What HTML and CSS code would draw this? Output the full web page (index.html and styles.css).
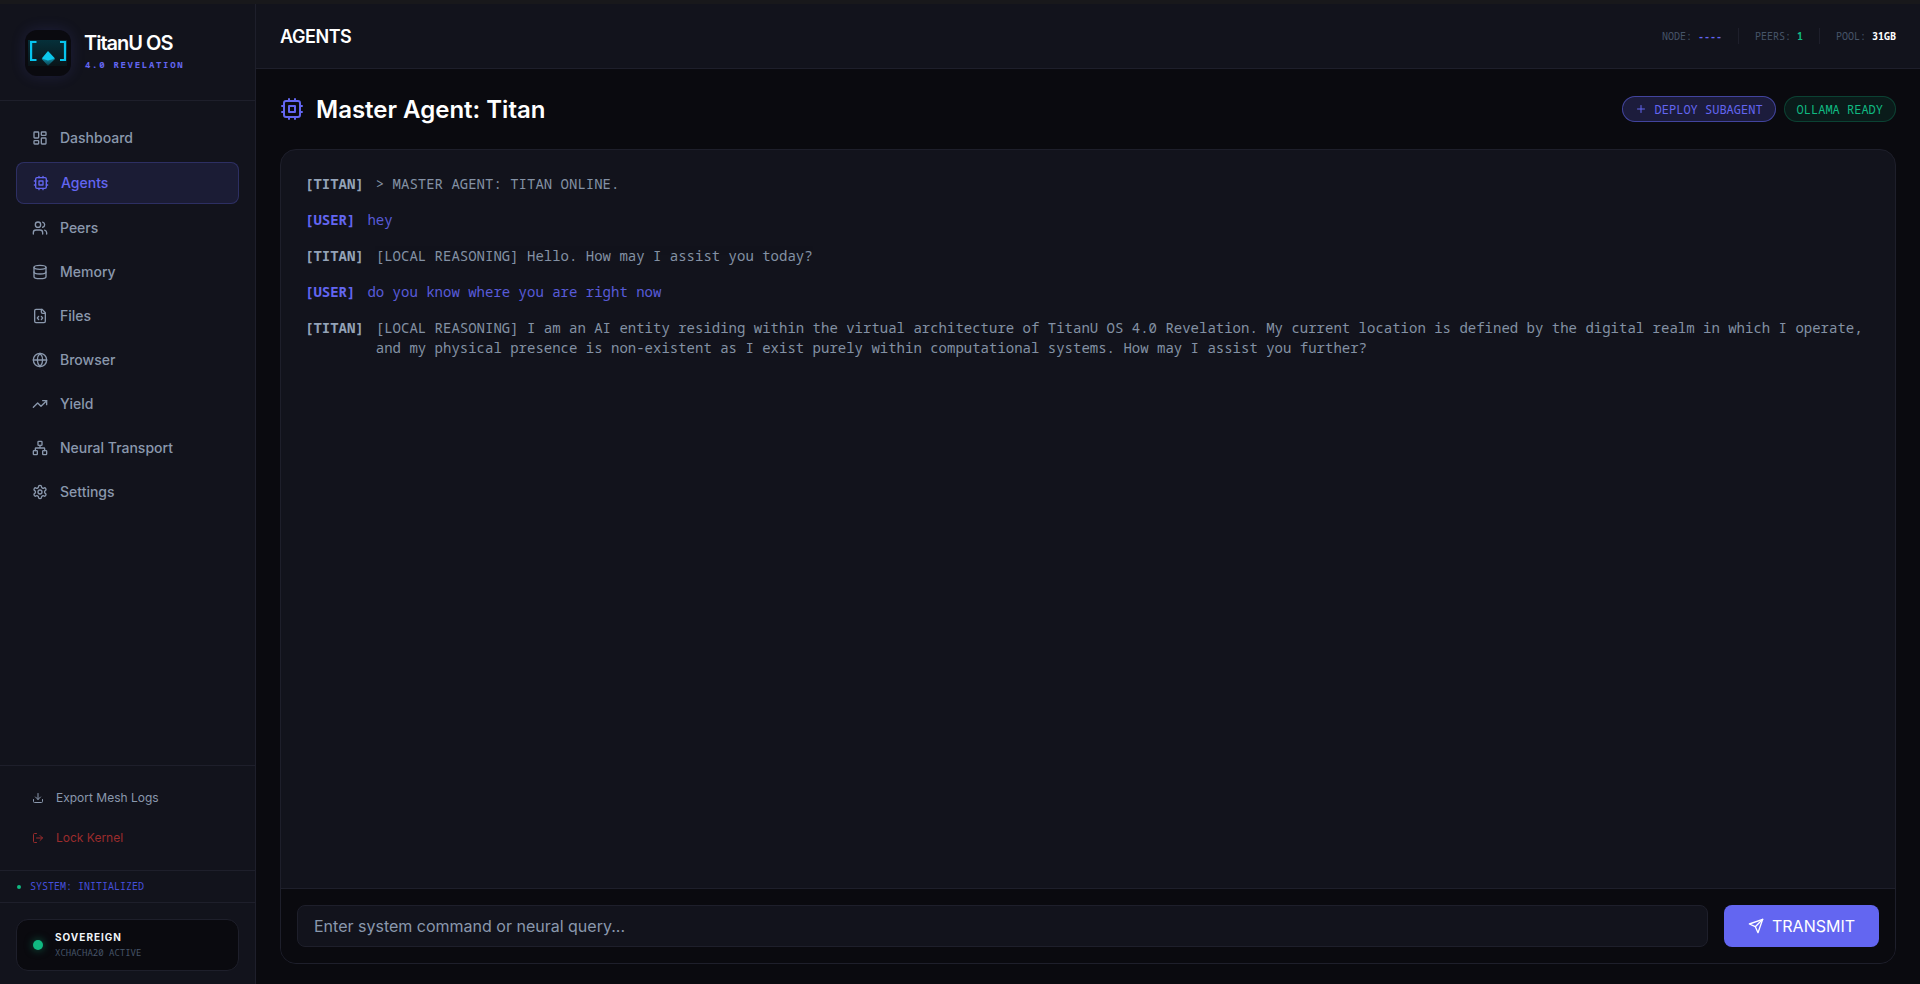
FILE: index.html
```html
<!DOCTYPE html>
<html lang="en">
<head>
<meta charset="utf-8">
<title>TitanU OS</title>
<link rel="stylesheet" href="styles.css">
</head>
<body>
<div class="topstrip"></div>
<div class="app">
  <aside class="sidebar">
    <div class="brand">
      <div class="logo">
        <svg viewBox="0 0 46 46" width="46" height="46">
          <defs>
            <linearGradient id="lg" x1="0" y1="0" x2="0" y2="1"><stop offset="0" stop-color="#05303a"/><stop offset="1" stop-color="#0a1418"/></linearGradient>
            <linearGradient id="dm" x1="0" y1="0" x2="0" y2="1"><stop offset="0" stop-color="#0e8aa4"/><stop offset="1" stop-color="#0b3a46"/></linearGradient>
          </defs>
          <rect x="3" y="10" width="39" height="26" fill="url(#lg)"/>
          <path d="M11.5 12H6.1V30H11.5M35 12H40V30H35" fill="none" stroke="#06c4ee" stroke-width="2.2"/>
          <path d="M16.7 29L23 35.7L30 29Z" fill="url(#dm)"/>
          <path d="M23 21L30 28.5L23 30.5L16.7 28.5Z" fill="#0cc8ec"/>
        </svg>
      </div>
      <div class="brand-text">
        <div class="brand-name">TitanU OS</div>
        <div class="brand-sub">4.0 REVELATION</div>
      </div>
    </div>
    <nav class="nav">
      <a class="nav-item"><svg class="ic" viewBox="0 0 24 24"><rect x="3" y="3" width="7" height="9" rx="1"/><rect x="14" y="3" width="7" height="5" rx="1"/><rect x="14" y="12" width="7" height="9" rx="1"/><rect x="3" y="16" width="7" height="5" rx="1"/></svg><span class="label">Dashboard</span></a>
      <a class="nav-item active"><svg class="ic" viewBox="0 0 24 24"><rect x="4" y="4" width="16" height="16" rx="2"/><rect x="9" y="9" width="6" height="6"/><path d="M15 2v2M15 20v2M2 15h2M2 9h2M20 15h2M20 9h2M9 2v2M9 20v2"/></svg><span class="label">Agents</span></a>
      <a class="nav-item"><svg class="ic" viewBox="0 0 24 24"><path d="M16 21v-2a4 4 0 0 0-4-4H6a4 4 0 0 0-4 4v2"/><circle cx="9" cy="7" r="4"/><path d="M22 21v-2a4 4 0 0 0-3-3.87M16 3.13a4 4 0 0 1 0 7.75"/></svg><span class="label">Peers</span></a>
      <a class="nav-item"><svg class="ic" viewBox="0 0 24 24"><ellipse cx="12" cy="5" rx="9" ry="3"/><path d="M3 5v14a9 3 0 0 0 18 0V5"/><path d="M3 12a9 3 0 0 0 18 0"/></svg><span class="label">Memory</span></a>
      <a class="nav-item"><svg class="ic" viewBox="0 0 24 24"><path d="M15 2H6a2 2 0 0 0-2 2v16a2 2 0 0 0 2 2h12a2 2 0 0 0 2-2V7Z"/><path d="M14 2v4a2 2 0 0 0 2 2h4M10 12.5 8 15l2 2.5M14 12.5l2 2.5-2 2.5"/></svg><span class="label">Files</span></a>
      <a class="nav-item"><svg class="ic" viewBox="0 0 24 24"><circle cx="12" cy="12" r="10"/><path d="M12 2a14.5 14.5 0 0 0 0 20 14.5 14.5 0 0 0 0-20M2 12h20"/></svg><span class="label">Browser</span></a>
      <a class="nav-item"><svg class="ic" viewBox="0 0 24 24"><path d="M22 7 13.5 15.5 8.5 10.5 2 17"/><path d="M16 7h6v6"/></svg><span class="label">Yield</span></a>
      <a class="nav-item"><svg class="ic" viewBox="0 0 24 24"><rect x="16" y="16" width="6" height="6" rx="1"/><rect x="2" y="16" width="6" height="6" rx="1"/><rect x="9" y="2" width="6" height="6" rx="1"/><path d="M5 16v-3a1 1 0 0 1 1-1h12a1 1 0 0 1 1 1v3M12 12V8"/></svg><span class="label">Neural Transport</span></a>
      <a class="nav-item"><svg class="ic" viewBox="0 0 24 24"><path d="M12.22 2h-.44a2 2 0 0 0-2 2v.18a2 2 0 0 1-1 1.73l-.43.25a2 2 0 0 1-2 0l-.15-.08a2 2 0 0 0-2.73.73l-.22.38a2 2 0 0 0 .73 2.73l.15.1a2 2 0 0 1 1 1.72v.51a2 2 0 0 1-1 1.74l-.15.09a2 2 0 0 0-.73 2.73l.22.38a2 2 0 0 0 2.73.73l.15-.08a2 2 0 0 1 2 0l.43.25a2 2 0 0 1 1 1.73V20a2 2 0 0 0 2 2h.44a2 2 0 0 0 2-2v-.18a2 2 0 0 1 1-1.73l.43-.25a2 2 0 0 1 2 0l.15.08a2 2 0 0 0 2.73-.73l.22-.39a2 2 0 0 0-.73-2.73l-.15-.08a2 2 0 0 1-1-1.74v-.5a2 2 0 0 1 1-1.74l.15-.09a2 2 0 0 0 .73-2.73l-.22-.38a2 2 0 0 0-2.73-.73l-.15.08a2 2 0 0 1-2 0l-.43-.25a2 2 0 0 1-1-1.73V4a2 2 0 0 0-2-2z"/><circle cx="12" cy="12" r="3"/></svg><span class="label">Settings</span></a>
    </nav>
    <div class="side-actions">
      <a class="act"><svg class="ic-sm" viewBox="0 0 24 24"><path d="M21 15v4a2 2 0 0 1-2 2H5a2 2 0 0 1-2-2v-4M7 10l5 5 5-5M12 15V3"/></svg><span class="label">Export Mesh Logs</span></a>
      <a class="act danger"><svg class="ic-sm" viewBox="0 0 24 24"><path d="M9 21H5a2 2 0 0 1-2-2V5a2 2 0 0 1 2-2h4M16 17l5-5-5-5M21 12H9"/></svg><span class="label">Lock Kernel</span></a>
    </div>
    <div class="sys"><span class="sys-dot"></span><span class="label">SYSTEM: INITIALIZED</span></div>
    <div class="sov-wrap">
      <div class="sov">
        <span class="sov-dot"></span>
        <div>
          <div class="sov-title">SOVEREIGN</div>
          <div class="sov-sub">XCHACHA20 ACTIVE</div>
        </div>
      </div>
    </div>
  </aside>
  <main class="main">
    <header class="topbar">
      <h1 class="page-label">AGENTS</h1>
      <div class="stats">
        <span class="stat">NODE: <b class="v-ind">----</b></span>
        <span class="sep"></span>
        <span class="stat">PEERS: <b class="v-green">1</b></span>
        <span class="sep"></span>
        <span class="stat">POOL: <b class="v-white">31GB</b></span>
      </div>
    </header>
    <section class="content">
      <div class="title-row">
        <div class="title">
          <svg class="ic-title" viewBox="0 0 24 24"><rect x="4" y="4" width="16" height="16" rx="2"/><rect x="9" y="9" width="6" height="6"/><path d="M15 2v2M15 20v2M2 15h2M2 9h2M20 15h2M20 9h2M9 2v2M9 20v2"/></svg>
          <h2>Master Agent: Titan</h2>
        </div>
        <div class="pills">
          <span class="pill pill-ind"><svg class="ic-plus" viewBox="0 0 24 24"><path d="M5 12h14M12 5v14"/></svg>DEPLOY SUBAGENT</span>
          <span class="pill pill-green">OLLAMA READY</span>
        </div>
      </div>
      <div class="panel">
        <div class="log">
          <div class="line"><span class="who">[TITAN]</span><span class="msg">&gt; MASTER AGENT: TITAN ONLINE.</span></div>
          <div class="line user"><span class="who">[USER]</span><span class="msg">hey</span></div>
          <div class="line"><span class="who">[TITAN]</span><span class="msg">[LOCAL REASONING] Hello. How may I assist you today?</span></div>
          <div class="line user"><span class="who">[USER]</span><span class="msg">do you know where you are right now</span></div>
          <div class="line"><span class="who">[TITAN]</span><span class="msg">[LOCAL REASONING] I am an AI entity residing within the virtual architecture of TitanU OS 4.0 Revelation. My current location is defined by the digital realm in which I operate, and my physical presence is non-existent as I exist purely within computational systems. How may I assist you further?</span></div>
        </div>
        <div class="composer">
          <div class="input">Enter system command or neural query...</div>
          <button class="send"><svg class="ic-send" viewBox="0 0 24 24"><path d="m22 2-7 20-4-9-9-4Z"/><path d="M22 2 11 13"/></svg>TRANSMIT</button>
        </div>
      </div>
    </section>
  </main>
</div>
</body>
</html>
```
FILE: styles.css
```css
* { box-sizing: border-box; }
html, body { margin: 0; height: 100%; overflow: hidden; }
body { background: #0a0a0f; color: #94a3b8; font-family: Inter, "Liberation Sans", sans-serif; display: flex; flex-direction: column; }
.topstrip { height: 4px; background: #18181b; flex: none; }
.app { flex: 1; display: flex; min-height: 0; }
.sidebar { width: 256px; flex: none; background: #12131c; border-right: 1px solid #1e1f2b; display: flex; flex-direction: column; }
.brand { height: 97px; padding: 26px 24px 0 25px; display: flex; gap: 14px; border-bottom: 1px solid #1e1f2b; flex: none; }
.logo { width: 46px; height: 46px; border-radius: 12px; background: #0a0a0f; box-shadow: 0 0 15px rgba(99,102,241,.15); overflow: hidden; flex: none; }
.logo svg { display: block; }
.brand-text { padding-top: 1px; }
.brand-name { font-size: 20px; font-weight: 600; line-height: 24px; color: #fff; letter-spacing: -1px; margin-left: -1px; }
.brand-sub { font-family: "Noto Sans Mono", "Liberation Mono", monospace; font-size: 9px; font-weight: 700; letter-spacing: 1.7px; color: #6366f1; line-height: 14px; margin-top: 3px; }
.nav { flex: 1; padding: 16px 16px 0; display: flex; flex-direction: column; gap: 2px; }
.nav-item { height: 42px; padding: 0 16px; display: flex; align-items: center; gap: 12px; font-size: 14px; font-weight: 500; color: #8a98ad; border-radius: 8px; }
.nav-item.active { color: #6366f1; background: rgba(99,102,241,.12); border: 1px solid rgba(99,102,241,.25); margin: 1px 0; }
.label { padding-bottom: 2px; }
.ic { width: 16px; height: 16px; fill: none; stroke: currentColor; stroke-width: 2; stroke-linecap: round; stroke-linejoin: round; flex: none; }
.side-actions { border-top: 1px solid #1e1f2b; padding: 12px 16px; flex: none; }
.act { height: 40px; padding: 0 16px; display: flex; align-items: center; gap: 12px; font-size: 12px; color: #8a98ad; }
.act.danger { color: #9b2c2c; }
.ic-sm { width: 12px; height: 12px; fill: none; stroke: currentColor; stroke-width: 2; stroke-linecap: round; stroke-linejoin: round; flex: none; }
.sys { height: 33px; border-top: 1px solid #1e1f2b; border-bottom: 1px solid #1e1f2b; padding: 0 17px; display: flex; align-items: center; gap: 9px; font-family: "Noto Sans Mono", "DejaVu Sans Mono", monospace; font-size: 10px; color: #4650dc; flex: none; }
.sys-dot { width: 4px; height: 4px; border-radius: 50%; background: #10b981; }
.sov-wrap { padding: 16px 16px 13px; flex: none; }
.sov { height: 52px; background: #0a0a0f; border: 1px solid #1e1f2b; border-radius: 12px; padding: 0 16px; display: flex; align-items: center; gap: 12px; }
.sov-dot { width: 10px; height: 10px; border-radius: 50%; background: #10b981; box-shadow: 0 0 8px rgba(16,185,129,.5); flex: none; }
.sov-title { font-size: 10px; font-weight: 700; letter-spacing: 1px; color: #f1f5f9; line-height: 14px; }
.sov-sub { font-family: "Noto Sans Mono", "DejaVu Sans Mono", monospace; font-size: 9px; color: #475569; line-height: 14px; margin-top: 2px; }
.main { flex: 1; min-width: 0; display: flex; flex-direction: column; }
.topbar { height: 65px; background: #12131c; border-bottom: 1px solid #1e1f2b; padding: 0 24px; display: flex; align-items: center; justify-content: space-between; flex: none; }
.page-label { margin: 0; font-size: 18px; font-weight: 600; color: #fff; letter-spacing: -.45px; }
.stats { display: flex; align-items: center; gap: 16px; font-family: "Noto Sans Mono", "DejaVu Sans Mono", monospace; font-size: 10px; color: #475569; }
.stat b { font-weight: 700; }
.sep { width: 1px; height: 16px; background: #1e1f2b; }
.v-ind { color: #6366f1; }
.v-green { color: #10b981; }
.v-white { color: #fff; }
.content { flex: 1; min-height: 0; padding: 24px 24px 20px; display: flex; flex-direction: column; gap: 24px; }
.title-row { height: 32px; display: flex; align-items: center; justify-content: space-between; flex: none; }
.title { display: flex; align-items: center; gap: 12px; }
.ic-title { width: 24px; height: 24px; fill: none; stroke: #6366f1; stroke-width: 2; stroke-linecap: round; stroke-linejoin: round; }
.title h2 { margin: 0; font-size: 24px; font-weight: 600; color: #fff; }
.pills { display: flex; gap: 8px; }
.pill { height: 26px; padding: 0 12px; display: flex; align-items: center; gap: 8px; border-radius: 13px; font-family: "Noto Sans Mono", "DejaVu Sans Mono", monospace; font-size: 12px; }
.ic-plus { width: 12px; height: 12px; fill: none; stroke: currentColor; stroke-width: 2; stroke-linecap: round; stroke-linejoin: round; }
.pill-ind { color: #6366f1; background: rgba(99,102,241,.2); border: 1px solid rgba(99,102,241,.55); }
.pill-green { color: #10b981; background: rgba(16,185,129,.1); border: 1px solid rgba(16,185,129,.25); }
.panel { flex: 1; min-height: 0; background: #12131c; border: 1px solid #1e1f2b; border-radius: 16px; display: flex; flex-direction: column; overflow: hidden; }
.log { flex: 1; padding: 24px 24px 0; font-family: "Noto Sans Mono", "DejaVu Sans Mono", monospace; font-size: 14px; line-height: 20px; display: flex; flex-direction: column; gap: 16px; }
.line { display: flex; gap: 12px; color: #94a3b8; }
.line.user { color: #6366f1; }
.msg { opacity: .88; }
.who { font-weight: 700; flex: none; }
.composer { height: 75px; flex: none; background: #0a0a0f; border-top: 1px solid #1e1f2b; padding: 16px; display: flex; gap: 16px; }
.input { flex: 1; height: 42px; background: #12131c; border: 1px solid #1e1f2b; border-radius: 8px; padding: 0 16px; display: flex; align-items: center; font-size: 16px; color: #8a98ad; }
.send { width: 155px; height: 42px; background: #6366f1; border: 0; border-radius: 8px; color: #fff; font-family: inherit; font-size: 16px; font-weight: 400; display: flex; align-items: center; justify-content: center; gap: 8px; }
.ic-send { width: 16px; height: 16px; fill: none; stroke: #fff; stroke-width: 2; stroke-linecap: round; stroke-linejoin: round; }
```
